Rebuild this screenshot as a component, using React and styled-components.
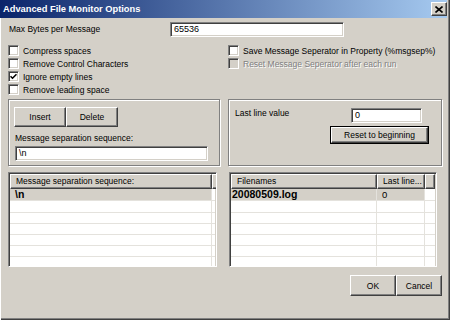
import styled, { createGlobalStyle } from "styled-components";

const GlobalStyle = createGlobalStyle`
  html, body {
    margin: 0;
    padding: 0;
    background: #d4d0c8;
  }
  body {
    font-family: "Liberation Sans", Arial, sans-serif;
    font-size: 8.5px;
    color: #000;
  }
`;

const Window = styled.div`
  box-sizing: border-box;
  width: 450px;
  height: 320px;
  display: flex;
  flex-direction: column;
  padding: 0 3px 2px 0;
  background: #d4d0c8;
  box-shadow: inset 1px 0 0 #fff, inset -1px -1px 0 #404040,
    inset -2px -2px 0 #808080;
`;

const TitleBar = styled.div`
  height: 18px;
  display: flex;
  align-items: center;
  justify-content: space-between;
  padding-left: 3px;
  background: linear-gradient(to right, #0a246a, #a6caf0);
`;

const Title = styled.span`
  color: #fff;
  font-weight: bold;
  font-size: 9.3px;
`;

const CloseButton = styled.div`
  box-sizing: border-box;
  width: 16px;
  height: 14px;
  display: flex;
  align-items: center;
  justify-content: center;
  background: #d4d0c8;
  border-top: 1px solid #fff;
  border-left: 1px solid #fff;
  border-right: 1px solid #404040;
  border-bottom: 1px solid #404040;
  box-shadow: inset -1px -1px 0 #808080;
`;

const Content = styled.div`
  display: flex;
  flex-direction: column;
  padding: 0 5px 0 8px;
`;

const TopRow = styled.div`
  display: flex;
  align-items: center;
  margin-top: 4px;
  height: 15px;
`;

const FieldLabel = styled.span`
  width: ${(p) => p.$width || "auto"};
  padding-left: ${(p) => p.$indent || 0}px;
  box-sizing: border-box;
  line-height: 11px;
  white-space: nowrap;
`;

const TextBox = styled.div`
  box-sizing: border-box;
  width: ${(p) => p.$width}px;
  height: ${(p) => p.$height || 15}px;
  margin-left: ${(p) => p.$left || 0}px;
  background: #fff;
  border-top: 1px solid #808080;
  border-left: 1px solid #808080;
  border-right: 1px solid #fff;
  border-bottom: 1px solid #fff;
  box-shadow: inset 1px 1px 0 #404040, inset -1px -1px 0 #d4d0c8;
  padding: 1px 0 0 3px;
  line-height: 11px;
  font-size: 9px;
`;

const TwoCols = styled.div`
  display: grid;
  grid-template-columns: 212px 214px;
  column-gap: 8px;
  margin-top: ${(p) => p.$top}px;
`;

const CheckColumn = styled.div`
  display: flex;
  flex-direction: column;
  padding-top: 2px;
`;

const CheckRow = styled.label`
  display: flex;
  align-items: center;
  gap: 4px;
  height: 13px;
  color: ${(p) => (p.$disabled ? "#808080" : "#000")};
  text-shadow: ${(p) => (p.$disabled ? "1px 1px 0 #fff" : "none")};
  white-space: nowrap;
`;

const Box = styled.span`
  box-sizing: border-box;
  width: 11px;
  height: 11px;
  flex: none;
  display: flex;
  align-items: center;
  justify-content: center;
  background: ${(p) => (p.$disabled ? "#d4d0c8" : "#fff")};
  border-top: 1px solid #808080;
  border-left: 1px solid #808080;
  border-right: 1px solid #fff;
  border-bottom: 1px solid #fff;
  box-shadow: inset 1px 1px 0 #404040, inset -1px -1px 0 #d4d0c8;
`;

const GroupPanel = styled.div`
  box-sizing: border-box;
  height: 67px;
  border: 1px solid #808080;
  box-shadow: 1px 1px 0 #fff, inset 1px 1px 0 #fff;
  display: flex;
  flex-direction: column;
  padding: ${(p) => p.$pad};
`;

const ButtonPair = styled.div`
  display: flex;
`;

const Button = styled.div`
  box-sizing: border-box;
  width: ${(p) => p.$width}px;
  height: ${(p) => p.$height || 20}px;
  display: flex;
  align-items: center;
  justify-content: center;
  background: #d4d0c8;
  border-top: 1px solid #fff;
  border-left: 1px solid #fff;
  border-right: 1px solid #404040;
  border-bottom: 1px solid #404040;
  box-shadow: inset -1px -1px 0 #808080;
  outline: ${(p) => (p.$default ? "1px solid #000" : "none")};
  white-space: nowrap;
`;

const PanelLabel = styled.div`
  margin: 6px 0 2px 1px;
  line-height: 11px;
  white-space: nowrap;
`;

const ValueRow = styled.div`
  display: flex;
  justify-content: space-between;
  padding-right: 19px;
`;

const ResetButton = styled(Button)`
  align-self: flex-end;
  margin: 4px 13px 0 0;
`;

const ListBox = styled.div`
  box-sizing: border-box;
  width: ${(p) => p.$width}px;
  height: 95px;
  margin-left: ${(p) => p.$left || 0}px;
  background: #fff;
  border-top: 1px solid #808080;
  border-left: 1px solid #808080;
  border-right: 1px solid #fff;
  border-bottom: 1px solid #fff;
  box-shadow: inset 1px 1px 0 #404040, inset -1px -1px 0 #d4d0c8;
  padding: 1px;
  overflow: hidden;
`;

const ListHeader = styled.div`
  display: flex;
  height: 15px;
`;

const HeaderCell = styled.div`
  box-sizing: border-box;
  flex: ${(p) => (p.$width ? `0 0 ${p.$width}px` : "1")};
  height: 15px;
  background: #d4d0c8;
  border-top: 1px solid #fff;
  border-left: 1px solid #fff;
  border-right: 1px solid #404040;
  border-bottom: 1px solid #404040;
  box-shadow: inset -1px -1px 0 #808080;
  padding-left: 5px;
  line-height: 12px;
  white-space: nowrap;
  overflow: hidden;
`;

const ListRow = styled.div`
  box-sizing: border-box;
  display: flex;
  height: ${(p) => p.$height}px;
  border-bottom: 1px solid #e4e2dd;
`;

const ListCell = styled.div`
  box-sizing: border-box;
  flex: ${(p) => (p.$width ? `0 0 ${p.$width}px` : "1")};
  background: ${(p) => (p.$selected ? "#d4d0c8" : "#fff")};
  border-right: ${(p) => (p.$width ? "1px solid #e4e2dd" : "none")};
  padding-left: ${(p) => p.$pad}px;
  font-weight: ${(p) => (p.$main ? "bold" : "normal")};
  font-size: ${(p) => (p.$main ? "10.5px" : "9.5px")};
  line-height: 11px;
  white-space: nowrap;
`;

const Footer = styled.div`
  display: flex;
  justify-content: flex-end;
  margin-top: 8px;
`;

const CheckMark = () => (
  <svg width="7" height="7" viewBox="0 0 7 7">
    <polyline
      points="0.5,3.2 2.5,5.2 6.5,1.2"
      fill="none"
      stroke="#000"
      strokeWidth="1.6"
    />
  </svg>
);

const CloseGlyph = () => (
  <svg width="8" height="7" viewBox="0 0 8 7">
    <path d="M0.5 0.5 L7.5 6.5 M7.5 0.5 L0.5 6.5" stroke="#000" strokeWidth="1.6" />
  </svg>
);

const Check = ({ label, checked, disabled }) => (
  <CheckRow $disabled={disabled}>
    <Box $disabled={disabled}>{checked && <CheckMark />}</Box>
    {label}
  </CheckRow>
);

const List = ({ width, left, columns, rows, pad }) => {
  const heights = [12, 12, 11, 11, 11, 11, 11];
  return (
    <ListBox $width={width} $left={left}>
      <ListHeader>
        {columns.map((col, i) => (
          <HeaderCell key={i} $width={col.width}>
            {col.title}
          </HeaderCell>
        ))}
        <HeaderCell />
      </ListHeader>
      {heights.map((h, r) => (
        <ListRow key={r} $height={h}>
          {columns.map((col, i) => (
            <ListCell
              key={i}
              $width={col.width}
              $main={i === 0}
              $selected={r === 0 && rows[0]}
              $pad={i === 0 ? pad : 5}
            >
              {rows[r] ? rows[r][i] : ""}
            </ListCell>
          ))}
          <ListCell />
        </ListRow>
      ))}
    </ListBox>
  );
};

export default function App() {
  return (
    <>
      <GlobalStyle />
      <Window>
        <TitleBar>
          <Title>Advanced File Monitor Options</Title>
          <CloseButton>
            <CloseGlyph />
          </CloseButton>
        </TitleBar>
        <Content>
          <TopRow>
            <FieldLabel $width="162px" $indent={1}>
              Max Bytes per Message
            </FieldLabel>
            <TextBox $width={174}>65536</TextBox>
          </TopRow>

          <TwoCols $top={5}>
            <CheckColumn>
              <Check label="Compress spaces" />
              <Check label="Remove Control Characters" />
              <Check label="Ignore empty lines" checked />
              <Check label="Remove leading space" />
            </CheckColumn>
            <CheckColumn>
              <Check label="Save Message Seperator in Property (%msgsep%)" />
              <Check label="Reset Message Seperator after each run" disabled />
            </CheckColumn>
          </TwoCols>

          <TwoCols $top={3}>
            <GroupPanel $pad="7px 0 0 5px">
              <ButtonPair>
                <Button $width={52}>Insert</Button>
                <Button $width={52}>Delete</Button>
              </ButtonPair>
              <PanelLabel>Message separation sequence:</PanelLabel>
              <TextBox $width={193} $left={1}>
                \n
              </TextBox>
            </GroupPanel>
            <GroupPanel $pad="8px 0 0 6px">
              <ValueRow>
                <FieldLabel>Last line value</FieldLabel>
                <TextBox $width={71}>0</TextBox>
              </ValueRow>
              <ResetButton $width={97} $height={16} $default>
                Reset to beginning
              </ResetButton>
            </GroupPanel>
          </TwoCols>

          <TwoCols $top={6}>
            <List
              width={209}
              pad={5}
              columns={[{ title: "Message separation sequence:", width: 202 }]}
              rows={[["\\n"]]}
            />
            <List
              width={208}
              left={1}
              pad={1}
              columns={[
                { title: "Filenames", width: 146 },
                { title: "Last line...", width: 48 },
              ]}
              rows={[["20080509.log", "0"]]}
            />
          </TwoCols>

          <Footer>
            <Button $width={46} $height={21}>
              OK
            </Button>
            <Button $width={46} $height={21}>
              Cancel
            </Button>
          </Footer>
        </Content>
      </Window>
    </>
  );
}
